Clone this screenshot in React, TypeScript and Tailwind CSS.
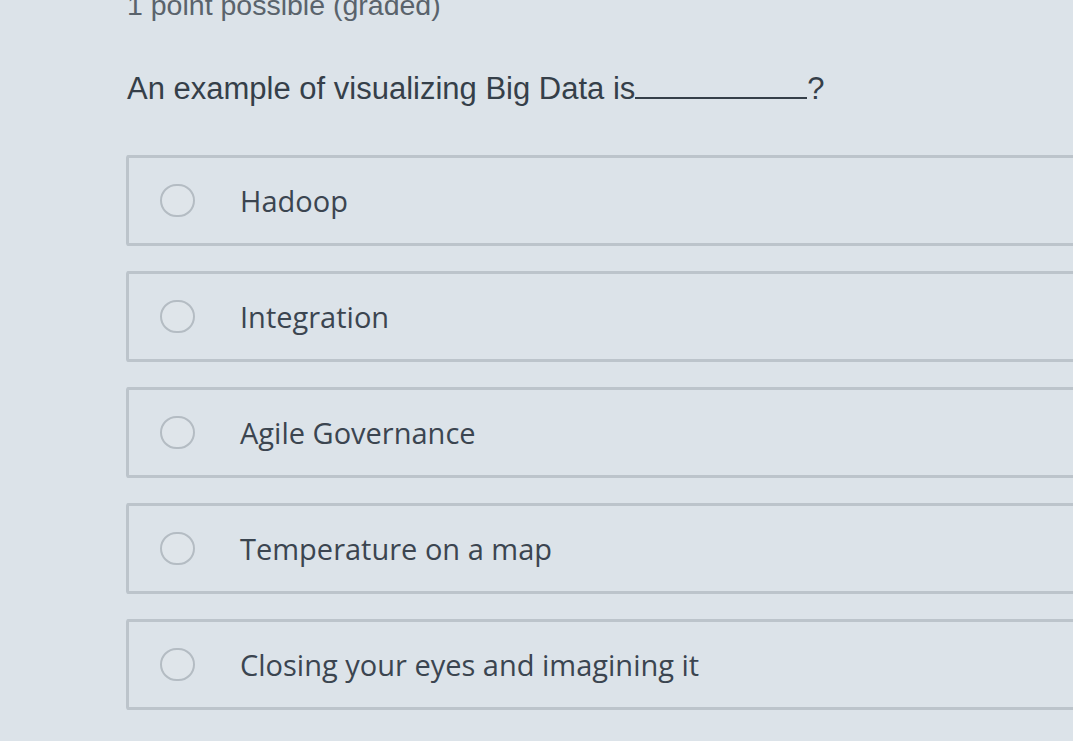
const OPTIONS = [
  "Hadoop",
  "Integration",
  "Agile Governance",
  "Temperature on a map",
  "Closing your eyes and imagining it",
];

export default function App() {
  return (
    <div className="w-[1073px] h-[741px] overflow-hidden bg-[#dce3e9]">
      <div className="pl-[127px]">
        <p className="-mt-[11px] text-[28.5px] leading-[32px] text-[#5a636c] font-['Liberation_Sans',sans-serif]">
          1 point possible (graded)
        </p>
        <p className="mt-[50px] text-[31px] leading-[36px] text-[#353f49] font-['Liberation_Sans',sans-serif]">
          An example of visualizing Big Data is
          <span className="inline-block w-[172px] border-b-2 border-[#353f49] align-baseline"></span>
          ?
        </p>
      </div>
      <div className="mt-[48px] ml-[126px] -mr-6 flex flex-col gap-[25px]">
        {OPTIONS.map((opt) => (
          <label
            key={opt}
            className="h-[91px] flex items-center border-[3px] border-r-0 border-[#bcc4cb] rounded-[3px] cursor-pointer"
          >
            <span className="ml-[31px] w-[35px] h-[33px] rounded-full border-2 border-[#b4bcc3] bg-[#dfe5ea] shrink-0"></span>
            <span className="ml-[45px] text-[29px] text-[#3b4550] font-['Open_Sans',sans-serif]">{opt}</span>
          </label>
        ))}
      </div>
    </div>
  );
}
